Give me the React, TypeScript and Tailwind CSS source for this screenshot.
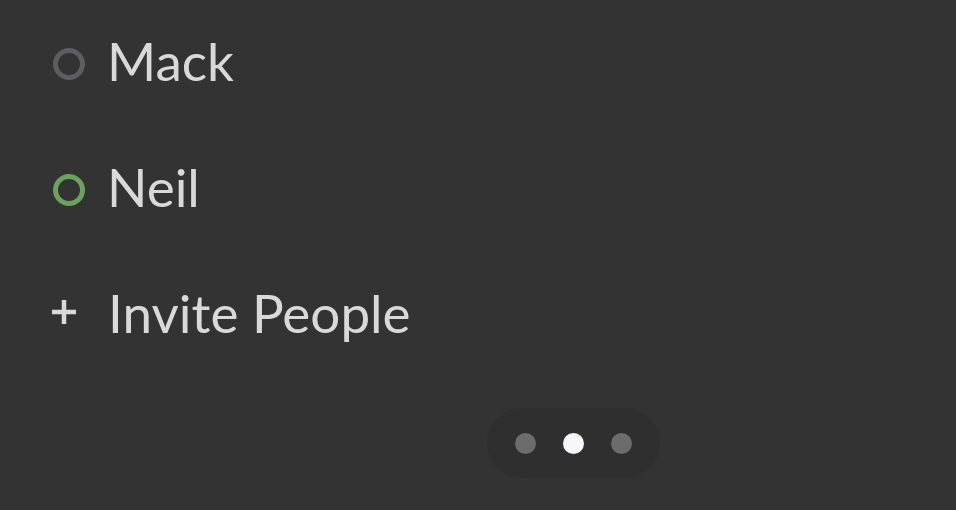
export default function App() {
  const people = [
    { name: 'Mack', ring: 'border-[#5e5e60]' },
    { name: 'Neil', ring: 'border-[#6ba35c]' },
  ];

  return (
    <div className="h-[510px] w-[956px] overflow-hidden bg-[#333333] font-['Lato',sans-serif] text-[#d9d9d9]">
      <ul className="pl-[53px]">
        {people.map((p) => (
          <li key={p.name} className="flex h-[126px] items-center">
            <span className={`mt-[2px] h-[32px] w-[32px] shrink-0 rounded-full border-[5px] ${p.ring}`} />
            <span className="mb-[6px] ml-[22px] text-[53px] leading-none">{p.name}</span>
          </li>
        ))}
        <li className="flex h-[126px] items-center">
          <svg className="mb-[6px] ml-[-1px] shrink-0" width="24" height="24" viewBox="0 0 24 24">
            <path d="M12 0v24M0 12h24" stroke="#d9d9d9" strokeWidth="4.5" />
          </svg>
          <span className="mb-[6px] ml-[32px] text-[53px] leading-none">Invite People</span>
        </li>
      </ul>
      <div className="ml-[487px] mt-[30px] flex h-[70px] w-[173px] items-center justify-center gap-[27px] rounded-full bg-[#2f2f2f]">
        <span className="h-[21px] w-[21px] rounded-full bg-[#6c6c6c]" />
        <span className="h-[21px] w-[21px] rounded-full bg-[#f7f7f9]" />
        <span className="h-[21px] w-[21px] rounded-full bg-[#6c6c6c]" />
      </div>
    </div>
  );
}
